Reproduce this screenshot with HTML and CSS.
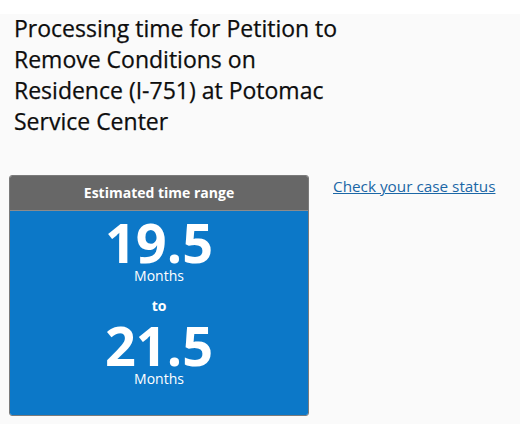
FILE: index.html
```html
<!DOCTYPE html>
<html lang="en">
<head>
<meta charset="utf-8">
<title>Processing time</title>
<link rel="stylesheet" href="styles.css">
</head>
<body>
<div class="topbar"></div>
<main class="content">
  <h1 class="title">Processing time for Petition to Remove Conditions on Residence (I-751) at Potomac Service Center</h1>
  <div class="row">
    <section class="range-card">
      <div class="range-head">Estimated time range</div>
      <div class="range-body">
        <div class="num">19.5</div>
        <div class="unit">Months</div>
        <div class="to">to</div>
        <div class="num">21.5</div>
        <div class="unit">Months</div>
      </div>
    </section>
    <a class="status-link" href="#">Check your case status</a>
  </div>
</main>
</body>
</html>
```
FILE: styles.css
```css
* { box-sizing: border-box; }
html, body { margin: 0; padding: 0; }
body {
  background: #fafafa;
  font-family: "Open Sans", Arial, sans-serif;
  color: #111;
  width: 520px;
  height: 424px;
  overflow: hidden;
}
.topbar { height: 14px; background: #ffffff; }
.content { padding: 0 9px; }
.title {
  margin: -1px 0 0;
  padding: 0 0 0 5px;
  width: 345px;
  font-size: 23px;
  line-height: 31px;
  font-weight: 400;
  color: #0d0d0d;
  -webkit-text-stroke: 0.25px #0d0d0d;
}
.row {
  display: flex;
  align-items: flex-start;
  margin-top: 38px;
}
.range-card {
  width: 300px;
  border: 1px solid #7b7b7b;
  border-radius: 3px;
  overflow: hidden;
  flex: none;
}
.range-head {
  height: 35px;
  background: #676767;
  border-bottom: 1px solid #8c8c8c;
  color: #fff;
  font-weight: 700;
  font-size: 14px;
  line-height: 34px;
  text-align: center;
}
.range-body {
  background: #0c78c8;
  color: #fff;
  text-align: center;
  padding: 8px 0 27px;
}
.num {
  font-size: 54px;
  font-weight: 700;
  line-height: 47px;
}
.unit {
  font-size: 14px;
  line-height: 18px;
  margin-top: 1px;
}
.to {
  font-size: 14px;
  font-weight: 700;
  line-height: 18px;
  margin: 12px 0 7px;
}
.status-link {
  margin-left: 24px;
  margin-top: 1px;
  font-size: 15.3px;
  line-height: 20px;
  color: #1b67a6;
  text-decoration: underline;
}
```
